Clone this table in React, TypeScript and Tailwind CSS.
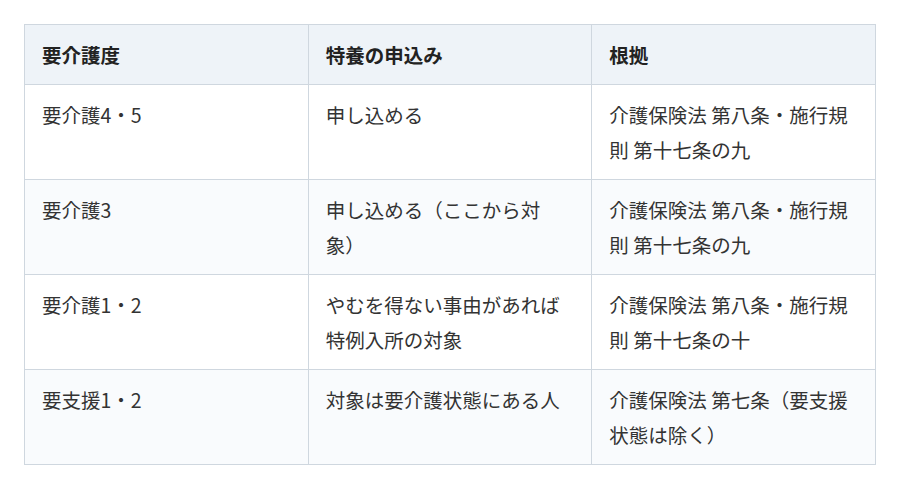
const rows: [string, string, string][] = [
  ["要介護4・5", "申し込める", "介護保険法 第八条・施行規則 第十七条の九"],
  ["要介護3", "申し込める（ここから対象）", "介護保険法 第八条・施行規則 第十七条の九"],
  ["要介護1・2", "やむを得ない事由があれば特例入所の対象", "介護保険法 第八条・施行規則 第十七条の十"],
  ["要支援1・2", "対象は要介護状態にある人", "介護保険法 第七条（要支援状態は除く）"],
];

const headers = ["要介護度", "特養の申込み", "根拠"];

export default function App() {
  return (
    <div
      className="w-[900px] h-[490px] bg-white pt-[24px] pl-[24px]"
      style={{ fontFamily: '"Noto Sans CJK JP", "Noto Sans", sans-serif' }}
    >
      <table className="w-[852px] table-fixed border-collapse text-[19.5px] leading-[35px] text-[#333] [text-spacing-trim:space-all]">
        <thead>
          <tr className="bg-[#eef3f8]">
            {headers.map((h) => (
              <th
                key={h}
                className="w-1/3 border border-[#cfd7df] px-[17px] py-[12px] text-left font-bold text-[#222] align-top"
              >
                {h}
              </th>
            ))}
          </tr>
        </thead>
        <tbody>
          {rows.map((row, i) => (
            <tr key={i} className={i % 2 === 1 ? "bg-[#f9fbfd]" : "bg-white"}>
              {row.map((cell, j) => (
                <td
                  key={j}
                  className="border border-[#cfd7df] px-[17px] py-[12px] align-top h-[95px]"
                >
                  {cell}
                </td>
              ))}
            </tr>
          ))}
        </tbody>
      </table>
    </div>
  );
}
